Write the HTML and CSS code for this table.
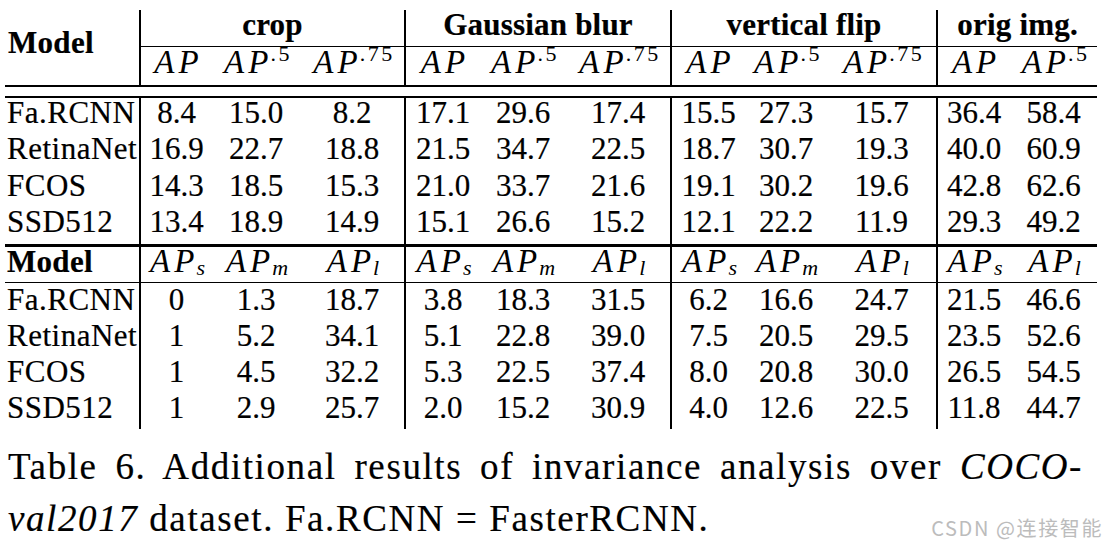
FILE: index.html
```html
<!DOCTYPE html>
<html lang="en">
<head>
<meta charset="utf-8">
<title>Table 6</title>
<link rel="stylesheet" href="styles.css">
</head>
<body>
<div class="page">
  <table class="res">
    <colgroup>
      <col class="k0"><col class="k1"><col class="k2"><col class="k3"><col class="k4"><col class="k5"><col class="k6"><col class="k7"><col class="k8"><col class="k9"><col class="k10"><col class="k11">
    </colgroup>
    <thead>
      <tr class="r-grp">
        <th class="model-h" rowspan="2">Model</th>
        <th class="g" colspan="3">crop</th>
        <th class="g" colspan="3">Gaussian blur</th>
        <th class="g" colspan="3">vertical flip</th>
        <th class="g" colspan="2">orig img.</th>
      </tr>
      <tr class="r-ap">
        <th class="g"><span class="m">AP</span></th>
        <th><span class="m">AP<sup>.5</sup></span></th>
        <th><span class="m">AP<sup>.75</sup></span></th>
        <th class="g"><span class="m">AP</span></th>
        <th><span class="m">AP<sup>.5</sup></span></th>
        <th><span class="m">AP<sup>.75</sup></span></th>
        <th class="g"><span class="m">AP</span></th>
        <th><span class="m">AP<sup>.5</sup></span></th>
        <th><span class="m">AP<sup>.75</sup></span></th>
        <th class="g"><span class="m">AP</span></th>
        <th><span class="m">AP<sup>.5</sup></span></th>
      </tr>
      <tr class="r-gap"><td colspan="12"></td></tr>
    </thead>
    <tbody class="top">
      <tr class="ra">
        <td class="name">Fa.RCNN</td>
        <td class="g">8.4</td><td>15.0</td><td>8.2</td>
        <td class="g">17.1</td><td>29.6</td><td>17.4</td>
        <td class="g">15.5</td><td>27.3</td><td>15.7</td>
        <td class="g">36.4</td><td>58.4</td>
      </tr>
      <tr class="rb">
        <td class="name">RetinaNet</td>
        <td class="g">16.9</td><td>22.7</td><td>18.8</td>
        <td class="g">21.5</td><td>34.7</td><td>22.5</td>
        <td class="g">18.7</td><td>30.7</td><td>19.3</td>
        <td class="g">40.0</td><td>60.9</td>
      </tr>
      <tr class="ra">
        <td class="name">FCOS</td>
        <td class="g">14.3</td><td>18.5</td><td>15.3</td>
        <td class="g">21.0</td><td>33.7</td><td>21.6</td>
        <td class="g">19.1</td><td>30.2</td><td>19.6</td>
        <td class="g">42.8</td><td>62.6</td>
      </tr>
      <tr class="rlast">
        <td class="name">SSD512</td>
        <td class="g">13.4</td><td>18.9</td><td>14.9</td>
        <td class="g">15.1</td><td>26.6</td><td>15.2</td>
        <td class="g">12.1</td><td>22.2</td><td>11.9</td>
        <td class="g">29.3</td><td>49.2</td>
      </tr>
    </tbody>
    <tbody class="bot">
      <tr class="r-h2">
        <th class="name b">Model</th>
        <th class="g"><span class="m">AP<sub>s</sub></span></th>
        <th><span class="m">AP<sub>m</sub></span></th>
        <th><span class="m">AP<sub>l</sub></span></th>
        <th class="g"><span class="m">AP<sub>s</sub></span></th>
        <th><span class="m">AP<sub>m</sub></span></th>
        <th><span class="m">AP<sub>l</sub></span></th>
        <th class="g"><span class="m">AP<sub>s</sub></span></th>
        <th><span class="m">AP<sub>m</sub></span></th>
        <th><span class="m">AP<sub>l</sub></span></th>
        <th class="g"><span class="m">AP<sub>s</sub></span></th>
        <th><span class="m">AP<sub>l</sub></span></th>
      </tr>
      <tr>
        <td class="name">Fa.RCNN</td>
        <td class="g">0</td><td>1.3</td><td>18.7</td>
        <td class="g">3.8</td><td>18.3</td><td>31.5</td>
        <td class="g">6.2</td><td>16.6</td><td>24.7</td>
        <td class="g">21.5</td><td>46.6</td>
      </tr>
      <tr>
        <td class="name">RetinaNet</td>
        <td class="g">1</td><td>5.2</td><td>34.1</td>
        <td class="g">5.1</td><td>22.8</td><td>39.0</td>
        <td class="g">7.5</td><td>20.5</td><td>29.5</td>
        <td class="g">23.5</td><td>52.6</td>
      </tr>
      <tr>
        <td class="name">FCOS</td>
        <td class="g">1</td><td>4.5</td><td>32.2</td>
        <td class="g">5.3</td><td>22.5</td><td>37.4</td>
        <td class="g">8.0</td><td>20.8</td><td>30.0</td>
        <td class="g">26.5</td><td>54.5</td>
      </tr>
      <tr class="rend">
        <td class="name">SSD512</td>
        <td class="g">1</td><td>2.9</td><td>25.7</td>
        <td class="g">2.0</td><td>15.2</td><td>30.9</td>
        <td class="g">4.0</td><td>12.6</td><td>22.5</td>
        <td class="g">11.8</td><td>44.7</td>
      </tr>
    </tbody>
  </table>

  <div class="caption">
    <div class="cap1">Table 6. Additional results of invariance analysis over <i>COCO-</i></div>
    <div class="cap2"><i>val2017</i> dataset. Fa.RCNN = FasterRCNN.</div>
  </div>

  <div class="wm">CSDN @连接智能</div>
</div>
</body>
</html>
```

FILE: styles.css
```css
* { box-sizing: border-box; }

html, body {
  margin: 0;
  padding: 0;
  background: #ffffff;
}

body {
  color: #000000;
  font-family: "Liberation Serif", "Times New Roman", serif;
}

.page {
  position: relative;
  width: 1107px;
  height: 548px;
  overflow: hidden;
}

/* ---------- table ---------- */
.res {
  margin: 10px 0 0 5px;
  width: 1092px;
  table-layout: fixed;
  border-collapse: separate;
  border-spacing: 0;
  font-size: 31px;
  line-height: 29px;
  -webkit-text-stroke: 0.2px #000;
}

.k0 { width: 134px; }
.k1 { width: 73px; }
.k2 { width: 88px; }
.k3 { width: 104px; }
.k4 { width: 76px; }
.k5 { width: 86px; }
.k6 { width: 104px; }
.k7 { width: 75px; }
.k8 { width: 82px; }
.k9 { width: 109px; }
.k10 { width: 74px; }
.k11 { width: 87px; }

.res th,
.res td {
  padding: 0;
  vertical-align: top;
  text-align: center;
  font-weight: normal;
  white-space: nowrap;
}

.res .g { border-left: 2px solid #000; }

.res .name {
  text-align: left;
  padding-left: 2px;
  letter-spacing: 0.5px;
}

.res .b { font-weight: bold; letter-spacing: 0.3px; }

/* header: group names */
.r-grp { height: 37px; }
.r-grp th {
  font-weight: bold;
  letter-spacing: 0.2px;
  border-bottom: 1px solid #000;
}
.r-grp .model-h {
  text-align: left;
  padding: 18px 0 0 3px;
  border-bottom: 2px solid #000;
  letter-spacing: 0.3px;
}

/* header: AP metrics */
.r-ap { height: 40px; }
.r-ap th {
  padding-top: 1px;
  border-bottom: 2px solid #000;
}

/* double-rule gap */
.r-gap { height: 11px; }
.r-gap td { border-bottom: 2px solid #000; }

/* upper body */
.top .ra { height: 36px; }
.top .rb { height: 37px; }
.top .rlast { height: 40px; }
.top .rlast td { border-bottom: 3px solid #000; }

/* second header */
.r-h2 { height: 37px; }
.r-h2 th { border-bottom: 1px solid #000; }

/* lower body */
.bot tr { height: 36px; }
.bot tr.rend { height: 38px; }
.bot td { padding-top: 2px; }

/* math */
.m {
  font-style: italic;
  font-size: 33px;
  letter-spacing: 4px;
  margin-right: -4px;
  -webkit-text-stroke: 0;
}
.m sup {
  font-style: normal;
  font-size: 22px;
  line-height: 0;
  vertical-align: 12px;
  letter-spacing: 2.5px;
  margin-left: -2px;
}
.m sub {
  font-style: italic;
  font-size: 22px;
  line-height: 0;
  vertical-align: -3px;
  letter-spacing: 2px;
  margin-left: -2px;
}

/* ---------- caption ---------- */
.caption {
  margin: 12px 0 0 8px;
  width: 1075px;
  font-size: 37px;
  line-height: 52px;
  letter-spacing: 1.6px;
  -webkit-text-stroke: 0.2px #000;
}
.cap1 {
  text-align: justify;
  text-align-last: justify;
}

/* ---------- watermark ---------- */
.wm {
  position: absolute;
  right: 4px;
  bottom: 10px;
  font-family: "Noto Sans CJK SC", "Noto Sans", sans-serif;
  font-size: 20px;
  line-height: 20px;
  letter-spacing: 1.6px;
  color: #bcbcbc;
}
```
